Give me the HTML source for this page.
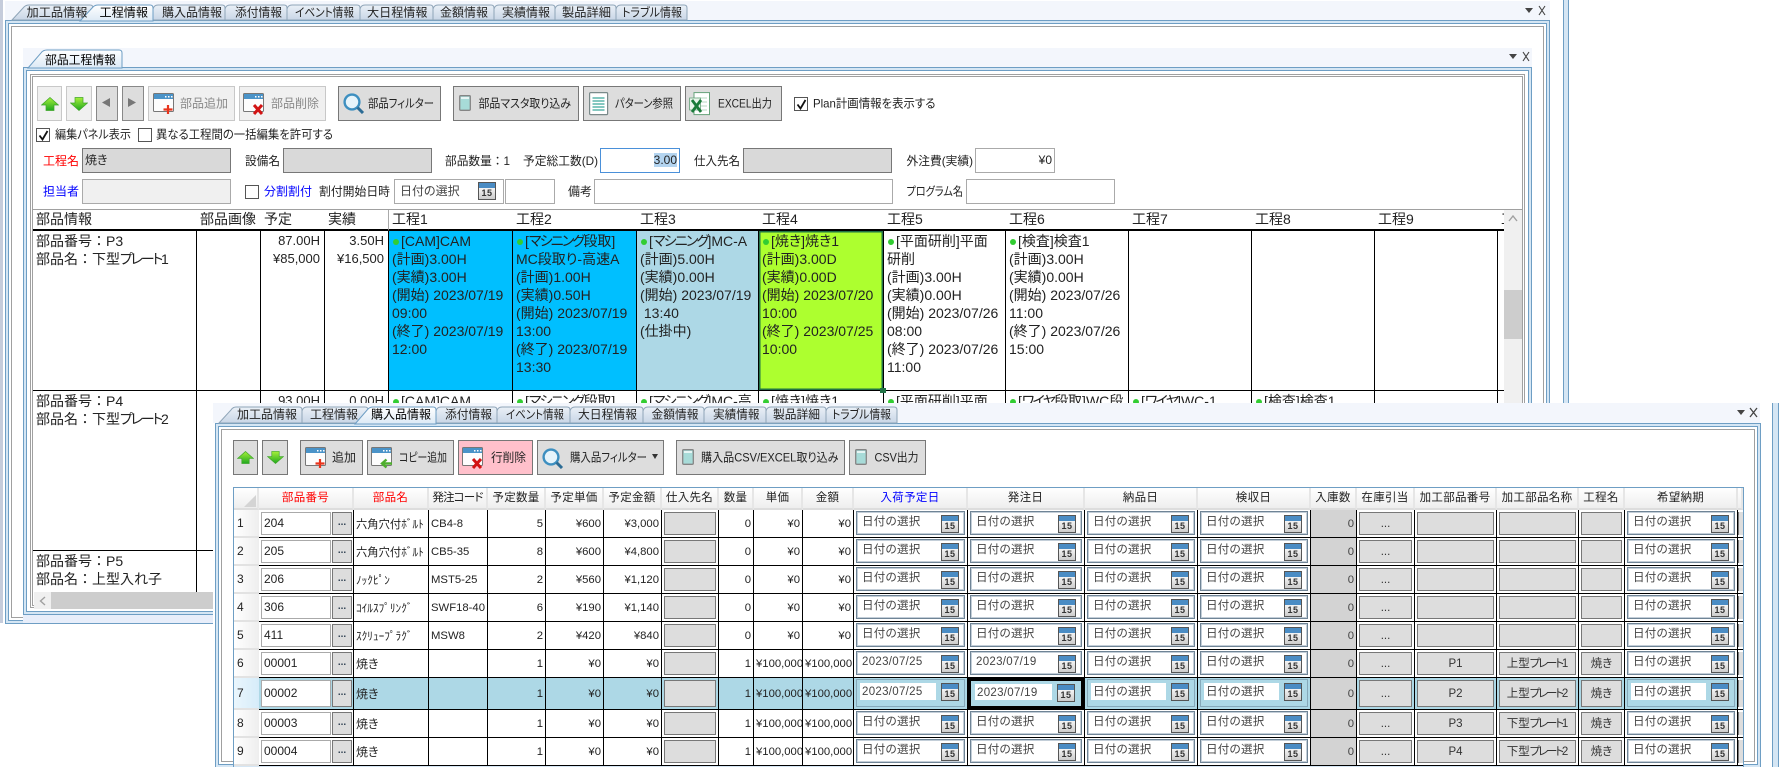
<!DOCTYPE html>
<html lang="ja"><head><meta charset="utf-8"><title>部品工程情報</title>
<style>
html,body{margin:0;padding:0;background:#fff;width:1782px;height:771px;overflow:hidden}
body{position:relative;font-family:"Liberation Sans","Noto Sans CJK JP",sans-serif;font-feature-settings:"palt";color:#222;font-size:12px}
div,span,svg{box-sizing:border-box}
.a{position:absolute}
.strip{position:absolute;background:#f3f6fc}
.fr{position:absolute;box-sizing:border-box;border:1px solid #6e9ec4;background:#fff;box-shadow:inset 0 0 0 2px #d5e6f4,inset 0 0 0 3px #6e9ec4,inset 0 0 0 5px #fff,inset 0 0 0 6px #a0a0a0}
.fi{box-shadow:inset 0 0 0 2px #d5e6f4,inset 0 0 0 3px #6e9ec4,inset 0 0 0 6px #fff,inset 0 0 0 7px #a0a0a0,inset 0 0 0 8px #fff,inset 0 0 0 9px #a0a0a0}
.f{font-feature-settings:normal}
.k{letter-spacing:-1.8px}
.k2{letter-spacing:-2.2px}
.btn{position:absolute;background:#ddd;border:1.5px solid #777}
.dis{background:#f0f0f0;border:1.5px solid #c8c8c8}
.i{position:absolute;height:25px;border:1.5px solid #777;background:#d9d9d9;font-size:12px;line-height:22px;padding-left:2px}
.w{background:#fff;border:1.5px solid #aaa}
.cb{position:absolute;width:14px;height:14px;border:1px solid #555;background:#fff}
.cb svg{position:absolute;left:1px;top:1px}
.c{position:absolute;display:block;box-sizing:border-box;width:18px;height:18px;border:1px solid #555;background:linear-gradient(#4a8cc4 0,#4a8cc4 5px,#f4f4f4 5px,#ccc);font:bold 9px/1 "Liberation Sans",sans-serif;padding-top:6px;text-align:center;color:#333;letter-spacing:.5px}
table{border-collapse:separate;border-spacing:0;table-layout:fixed;position:absolute;left:0;top:0}
#ga td{position:relative;vertical-align:top;padding:1px 3px;border-right:1px solid #000;border-bottom:1px solid #000;font-size:14px;line-height:18px;white-space:nowrap;overflow:hidden}
#ga td.z{border-right:0}
#ga th{font-weight:400;font-size:14px;line-height:19px;text-align:left;padding:0 3px;border-bottom:2px solid #000;white-space:nowrap;height:21px;box-sizing:border-box;overflow:hidden;vertical-align:top}
#ga td.n{text-align:right;font-size:13px;padding-right:4px}
#ga td.u{background:#00bfff}
#ga td.v{background:#add8e6}
#ga td.y{background:#adff2f;box-shadow:inset 0 0 0 1.5px #217346;overflow:visible}
.o{display:inline-block;width:6px;height:6px;border-radius:50%;background:#32cd32;margin:0 2px 1px 1px;vertical-align:middle}
#gb th{box-sizing:border-box;height:22px;padding:0;font-weight:400;font-size:11.5px;line-height:20px;text-align:center;background:linear-gradient(#fff,#eee);border-right:2px solid #e6e6e6;border-bottom:2px solid #ddd;white-space:nowrap;overflow:hidden;letter-spacing:.3px}
#gb td{position:relative;box-sizing:border-box;height:28px;padding:0 2px;border-right:1px solid #000;border-bottom:1px solid #000;font-size:11.3px;white-space:nowrap;overflow:hidden;background:#fff}
#gb tr.x td{height:32px;background:#add8e6}
#gb td.h{background:linear-gradient(90deg,#fff,#eee);border-right:0;border-bottom:2px solid #e2e2e2;padding-left:3px;font-size:12px}
#gb tr.x td.h{background:linear-gradient(90deg,#eaf6fd,#d6ecf9)}
#gb td.r{text-align:right;padding-right:2px}
#gb td.s,#gb tr.x td.s{background:#d3d3d3;text-align:right;padding-right:2px;color:#444}
#gb td.e,#gb tr.x td.e{padding:0;border-right:0;background:#fff}
#gb td.e::after{content:"";position:absolute;left:0;right:0;top:2px;bottom:2px;background:#ddd;border-left:1.5px solid #777}
.pn{position:absolute;left:2px;top:2px;bottom:2px;width:70px;background:#fff;border:1.5px solid #aaa;line-height:20px;padding-left:2px;font-size:12px}
.pb{position:absolute;left:73px;top:2px;bottom:2px;width:20px;background:#ddd;border:1.5px solid #777;text-align:center;line-height:19px;font-weight:700;font-size:10px;color:#345}
.x .pn{line-height:24px}
.x .pb{line-height:24px}
.g{position:absolute;left:2px;right:2px;top:2px;bottom:2px;background:#ddd;border:1.5px solid #777;text-align:center;line-height:22px;font-size:11.5px;color:#333}
.x .g{line-height:26px}
.d{position:absolute;left:2px;right:2px;top:1px;bottom:2px;border:1px solid #6f8496;box-shadow:inset 0 0 0 1px #c3ced8;background:#fff;color:#444;font-size:11.5px;line-height:20px;padding-left:5px;letter-spacing:.3px}
.d .c{right:5px;top:3px}
.x .d{background:#add8e6;border-color:#86a9ba;box-shadow:none}
.x .d span{position:absolute;left:3px;top:3px;bottom:6px;right:28px;background:#fff;padding-left:2px;line-height:18px}
.x .d .c{top:3px}
</style></head><body>
<svg width="0" height="0" style="position:absolute"><defs>
<linearGradient id="gu" x1="0" y1="0" x2="0" y2="1"><stop offset="0" stop-color="#a6f03a"/><stop offset="1" stop-color="#1fa81f"/></linearGradient>
<linearGradient id="tn" x1="0" y1="0" x2="0" y2="1"><stop offset="0" stop-color="#eaf0f7"/><stop offset="1" stop-color="#c9d6e6"/></linearGradient>
<linearGradient id="ta" x1="0" y1="0" x2="0" y2="1"><stop offset="0" stop-color="#ffffff"/><stop offset="1" stop-color="#dce9f5"/></linearGradient>
<symbol id="up" viewBox="0 0 18 14"><polygon points="9,.5 17.5,8 13,8 13,13.5 5,13.5 5,8 .5,8" fill="url(#gu)" stroke="#3fa52a" stroke-width=".7"/></symbol>
<symbol id="dn" viewBox="0 0 18 14"><polygon points="5,.5 13,.5 13,6 17.5,6 9,13.5 .5,6 5,6" fill="url(#gu)" stroke="#3fa52a" stroke-width=".7"/></symbol>
<symbol id="win" viewBox="0 0 22 20"><rect x=".5" y=".5" width="20" height="18" rx="1" fill="#fdfdfd" stroke="#777"/><rect x="1" y="1" width="19" height="5" fill="#4a93c8"/><rect x="12" y="3" width="1.5" height="1.5" fill="#fff"/><rect x="15" y="3" width="1.5" height="1.5" fill="#fff"/><rect x="18" y="3" width="1.5" height="1.5" fill="#fff"/></symbol>
<symbol id="mg" viewBox="0 0 22 21"><circle cx="9" cy="9" r="7.4" fill="#e6f4fb" stroke="#3d8fc0" stroke-width="2.4"/><path d="M14.5 14.5L20 20" stroke="#2c6c95" stroke-width="3"/></symbol>
<symbol id="doc" viewBox="0 0 12 16"><rect x=".7" y=".7" width="10.6" height="14.6" rx="1" fill="#a7dbd8" stroke="#858585" stroke-width="1.3"/><rect x="2" y="2" width="8" height="2" fill="#e6f5f4"/></symbol>
</defs></svg>

<!-- window A outer -->
<div class="a" style="left:0;top:0;width:3px;height:623px;background:#c5ccdb"></div>
<div class="a" style="left:1563px;top:0;width:6px;height:403px;background:#d5e6f4;border-left:1px solid #6e9ec4;border-right:1px solid #6e9ec4"></div>
<div class="strip" style="left:5px;top:1px;width:1545px;height:19px"></div>
<div class="fr" style="left:5px;top:20px;width:1545px;height:604px"></div>
<svg class="a" style="left:0;top:0" width="700" height="24">
<g stroke="#8fa5b8" fill="url(#tn)">
<path d="M12 20L24 7Q26 5 29 5L90 5Q93 5 93 8L93 20Z"/>
<path d="M153 20L153 9Q154 5 158 5L222 5Q225 5 225 8L225 20Z"/>
<path d="M225 20L225 9Q226 5 230 5L284 5Q287 5 287 8L287 20Z"/>
<path d="M287 20L287 9Q288 5 292 5L357 5Q360 5 360 8L360 20Z"/>
<path d="M360 20L360 9Q361 5 365 5L430 5Q433 5 433 8L433 20Z"/>
<path d="M433 20L433 9Q434 5 438 5L491 5Q494 5 494 8L494 20Z"/>
<path d="M494 20L494 9Q495 5 499 5L552 5Q555 5 555 8L555 20Z"/>
<path d="M555 20L555 9Q556 5 560 5L613 5Q616 5 616 8L616 20Z"/>
<path d="M616 20L616 9Q617 5 621 5L684 5Q687 5 687 8L687 20Z"/>
</g>
<path d="M80 21L93 7Q95 5 98 5L150 5Q153 5 153 8L153 21Z" fill="url(#ta)" stroke="#6e9ec4"/>
<g font-size="12" fill="#222">
<text x="26.5" y="16.5" textLength="61" lengthAdjust="spacingAndGlyphs">加工品情報</text>
<text x="99.5" y="16.5" textLength="48.5" lengthAdjust="spacingAndGlyphs" fill="#000">工程情報</text>
<text x="162" y="16.5" textLength="60" lengthAdjust="spacingAndGlyphs">購入品情報</text>
<text x="235" y="16.5" textLength="47" lengthAdjust="spacingAndGlyphs">添付情報</text>
<text x="295" y="16.5" textLength="59" lengthAdjust="spacingAndGlyphs">イベント情報</text>
<text x="367" y="16.5" textLength="60.5" lengthAdjust="spacingAndGlyphs">大日程情報</text>
<text x="440" y="16.5" textLength="48" lengthAdjust="spacingAndGlyphs">金額情報</text>
<text x="502" y="16.5" textLength="48" lengthAdjust="spacingAndGlyphs">実績情報</text>
<text x="562" y="16.5" textLength="49" lengthAdjust="spacingAndGlyphs">製品詳細</text>
<text x="622" y="16.5" textLength="60" lengthAdjust="spacingAndGlyphs">トラブル情報</text>
</g></svg>
<svg class="a" style="left:1522px;top:4px" width="26" height="14"><polygon points="3,4 11,4 7,9" fill="#444"/><path d="M17 2L23 11M23 2L17 11" stroke="#444" stroke-width="1.1"/></svg>

<!-- window A inner -->
<div class="strip" style="left:23px;top:48px;width:1509px;height:19px"></div>
<div class="fr fi" style="left:23px;top:67px;width:1509px;height:548px"></div>
<div class="a" style="left:23px;top:615px;width:190px;height:8px;background:#e8eefa"></div>
<svg class="a" style="left:20px;top:46px" width="110" height="24"><path d="M8 22L21 7Q23 4 27 4L99 4Q102 4 102 7L102 22Z" fill="url(#ta)" stroke="#6e9ec4"/><text x="25" y="18" font-size="12" textLength="71" lengthAdjust="spacingAndGlyphs" fill="#000">部品工程情報</text></svg>
<svg class="a" style="left:1506px;top:50px" width="26" height="14"><polygon points="3,4 11,4 7,9" fill="#444"/><path d="M17 2L23 11M23 2L17 11" stroke="#444" stroke-width="1.1"/></svg>

<!-- A toolbar -->
<div class="btn dis" style="left:37px;top:86px;width:25px;height:35px"><svg class="a" style="left:3px;top:10px" width="18" height="14"><use href="#up"/></svg></div>
<div class="btn dis" style="left:66px;top:86px;width:26px;height:35px"><svg class="a" style="left:3px;top:10px" width="18" height="14"><use href="#dn"/></svg></div>
<div class="btn" style="left:96px;top:86px;width:22px;height:35px;border-color:#888"><svg class="a" style="left:5px;top:11px" width="10" height="10"><polygon points="8,0 8,9 0,4.5" fill="#777"/></svg></div>
<div class="btn" style="left:122px;top:86px;width:22px;height:35px;border-color:#888"><svg class="a" style="left:5px;top:11px" width="10" height="10"><polygon points="0,0 8,4.5 0,9" fill="#777"/></svg></div>
<div class="btn dis" style="left:148px;top:86px;width:87px;height:35px"></div>
<svg class="a" style="left:153px;top:93px" width="22" height="22"><use href="#win" width="22" height="20"/><path d="M15 12V21M10.5 16.500H19.500" stroke="#e8341c" stroke-width="2.2"/></svg>
<div class="btn dis" style="left:239px;top:86px;width:87px;height:35px"></div>
<svg class="a" style="left:243px;top:93px" width="24" height="23"><use href="#win" width="22" height="20"/><path d="M11 12L19 21M19 12L11 21" stroke="#d21414" stroke-width="3"/></svg>
<div class="btn" style="left:338px;top:86px;width:103px;height:35px"></div>
<svg class="a" style="left:343px;top:93px" width="22" height="21"><use href="#mg"/></svg>
<div class="btn" style="left:453px;top:86px;width:126px;height:35px"></div>
<svg class="a" style="left:459px;top:95px" width="12" height="16"><use href="#doc"/></svg>
<div class="btn" style="left:583px;top:86px;width:98px;height:35px"></div>
<svg class="a" style="left:589px;top:92px" width="20" height="24"><rect x=".6" y=".6" width="18" height="22" rx="1" fill="#fff" stroke="#7a8a8a" stroke-width="1.2"/><path d="M3.500 6H15.500M3.500 9H15.500M3.500 12H15.500M3.500 15H15.500M3.500 18H15.500" stroke="#5cb5ac" stroke-width="1.6"/></svg>
<div class="btn" style="left:685px;top:86px;width:97px;height:35px"></div>
<svg class="a" style="left:689px;top:92px" width="22" height="24"><rect x="5" y=".6" width="15.500" height="22" fill="#fff" stroke="#67a27a"/><path d="M8 6H18M8 10H18M8 14H18M8 18H18" stroke="#b7d8c2"/><rect x=".6" y="6" width="11" height="12" fill="#eaf5ec" stroke="#67a27a" stroke-width=".8"/><path d="M3 8L12 20M12 8L3 20" stroke="#1b7b3a" stroke-width="2.800"/></svg>
<div class="cb" style="left:794px;top:97px"><svg width="11" height="11"><path d="M1.500 5.500L4.500 9.500L9.500 1" fill="none" stroke="#111" stroke-width="1.800"/></svg></div>
<div class="cb" style="left:36px;top:128px"><svg width="11" height="11"><path d="M1.500 5.500L4.500 9.500L9.500 1" fill="none" stroke="#111" stroke-width="1.800"/></svg></div>
<div class="cb" style="left:138px;top:128px"></div>

<div class="i" style="left:82px;top:148px;width:149px">焼き</div>
<div class="i" style="left:283px;top:148px;width:149px"></div>
<div class="i w" style="left:600px;top:148px;width:80px;border-color:#4a90d9;text-align:right;padding-right:2px"><span style="background:#b3d4f0">3.00</span></div>
<div class="i" style="left:743px;top:148px;width:149px"></div>
<div class="i w" style="left:975px;top:148px;width:80px;text-align:right;padding-right:2px">¥0</div>
<div class="i" style="left:82px;top:179px;width:149px;background:#f0f0f0;border-color:#aaa"></div>
<div class="cb" style="left:245px;top:185px"></div>
<div class="i w" style="left:394px;top:179px;width:110px;padding-left:5px;color:#444">日付の選択<b class="c" style="left:83px;top:2px">15</b></div>
<div class="i w" style="left:505px;top:179px;width:50px"></div>
<div class="i w" style="left:594px;top:179px;width:299px"></div>
<div class="i w" style="left:966px;top:179px;width:149px"></div>

<svg class="a" style="left:0;top:0" width="1200" height="210" font-size="12" fill="#222">
<g fill="#888"><text x="180" y="107.500" textLength="48" lengthAdjust="spacingAndGlyphs">部品追加</text><text x="271" y="107.500" textLength="48" lengthAdjust="spacingAndGlyphs">部品削除</text></g>
<text x="368" y="107.500" textLength="66" lengthAdjust="spacingAndGlyphs">部品フィルター</text>
<text x="478.500" y="107.500" textLength="92.500" lengthAdjust="spacingAndGlyphs">部品マスタ取り込み</text>
<text x="615" y="107.500" textLength="58" lengthAdjust="spacingAndGlyphs">パターン参照</text>
<text x="718" y="107.500" textLength="54" lengthAdjust="spacingAndGlyphs">EXCEL出力</text>
<text x="813" y="107.500" textLength="122.500" lengthAdjust="spacingAndGlyphs">Plan計画情報を表示する</text>
<text x="55" y="138.500" textLength="76" lengthAdjust="spacingAndGlyphs">編集パネル表示</text>
<text x="156" y="138.500" textLength="177" lengthAdjust="spacingAndGlyphs">異なる工程間の一括編集を許可する</text>
<text x="43" y="165" textLength="36" lengthAdjust="spacingAndGlyphs" fill="#f00">工程名</text>
<text x="245" y="165" textLength="35" lengthAdjust="spacingAndGlyphs">設備名</text>
<text x="445" y="165" textLength="65" lengthAdjust="spacingAndGlyphs" class="f">部品数量：1</text>
<text x="523" y="165" textLength="75" lengthAdjust="spacingAndGlyphs">予定総工数(D)</text>
<text x="694" y="165" textLength="46" lengthAdjust="spacingAndGlyphs">仕入先名</text>
<text x="906.500" y="165" textLength="66.500" lengthAdjust="spacingAndGlyphs">外注費(実績)</text>
<text x="43" y="195.500" textLength="36" lengthAdjust="spacingAndGlyphs" fill="#00f">担当者</text>
<text x="264" y="195.500" textLength="48" lengthAdjust="spacingAndGlyphs" fill="#00f">分割割付</text>
<text x="319" y="195.500" textLength="71" lengthAdjust="spacingAndGlyphs">割付開始日時</text>
<text x="568" y="195.500" textLength="24" lengthAdjust="spacingAndGlyphs">備考</text>
<text x="906.500" y="195.500" textLength="56.500" lengthAdjust="spacingAndGlyphs">プログラム名</text>
</svg>

<!-- grid A -->
<div class="a" style="left:33px;top:209px;width:1490px;height:1px;background:#a0a0a0"></div>
<div class="a" style="left:33px;top:210px;width:1471px;height:382px;overflow:hidden">
<table id="ga" style="width:1471px">
<colgroup><col style="width:164px"><col style="width:64px"><col style="width:64px"><col style="width:64px"><col style="width:124px"><col style="width:124px"><col style="width:122px"><col style="width:125px"><col style="width:122px"><col style="width:123px"><col style="width:123px"><col style="width:123px"><col style="width:123px"><col style="width:6px"></colgroup>
<tr><th>部品情報</th><th>部品画像</th><th>予定</th><th style="border-right:1px solid #aaa">実績</th><th>工程1</th><th>工程2</th><th>工程3</th><th>工程4</th><th>工程5</th><th>工程6</th><th>工程7</th><th>工程8</th><th>工程9</th><th>工程10</th></tr>
<tr style="height:160px">
<td>部品番号<span class="f">：</span>P3<br>部品名<span class="f">：</span>下型<span class="k2">プレート</span>1</td><td></td>
<td class="n">87.00H<br>¥85,000</td><td class="n">3.50H<br>¥16,500</td>
<td class="u"><b class="o"></b>[CAM]CAM<br>(計画)3.00H<br>(実績)3.00H<br>(開始) 2023/07/19<br>09:00<br>(終了) 2023/07/19<br>12:00</td>
<td class="u"><b class="o"></b>[<span class="k">マシニング</span>段取]<br>MC段取り-高速A<br>(計画)1.00H<br>(実績)0.50H<br>(開始) 2023/07/19<br>13:00<br>(終了) 2023/07/19<br>13:30</td>
<td class="v"><b class="o"></b>[<span class="k">マシニング</span>]MC-A<br>(計画)5.00H<br>(実績)0.00H<br>(開始) 2023/07/19<br>&nbsp;13:40<br>(仕掛中)</td>
<td class="y"><b class="o"></b>[焼き]焼き1<br>(計画)3.00D<br>(実績)0.00D<br>(開始) 2023/07/20<br>10:00<br>(終了) 2023/07/25<br>10:00</td>
<td><b class="o"></b>[平面研削]平面<br>研削<br>(計画)3.00H<br>(実績)0.00H<br>(開始) 2023/07/26<br>08:00<br>(終了) 2023/07/26<br>11:00</td>
<td><b class="o"></b>[検査]検査1<br>(計画)3.00H<br>(実績)0.00H<br>(開始) 2023/07/26<br>11:00<br>(終了) 2023/07/26<br>15:00</td>
<td></td><td></td><td></td><td class="z"></td></tr>
<tr style="height:160px">
<td>部品番号<span class="f">：</span>P4<br>部品名<span class="f">：</span>下型<span class="k2">プレート</span>2</td><td></td>
<td class="n">93.00H</td><td class="n">0.00H</td>
<td><b class="o"></b>[CAM]CAM</td><td><b class="o"></b>[<span class="k">マシニング</span>段取]</td><td><b class="o"></b>[<span class="k">マシニング</span>]MC-高</td><td><b class="o"></b>[焼き]焼き1</td><td><b class="o"></b>[平面研削]平面</td><td><b class="o"></b>[<span class="k">ワイヤ</span>段取]WC段</td><td><b class="o"></b>[<span class="k">ワイヤ</span>]WC-1</td><td><b class="o"></b>[検査]検査1</td><td></td><td class="z"></td></tr>
<tr style="height:60px"><td>部品番号<span class="f">：</span>P5<br>部品名<span class="f">：</span>上型入れ子</td><td></td><td></td><td></td><td></td><td></td><td></td><td></td><td></td><td></td><td></td><td></td><td></td><td class="z"></td></tr>
</table>
</div>
<div class="a" style="left:880px;top:388px;width:6px;height:5px;background:#217346"></div>
<div class="a" style="left:388px;top:210px;width:1px;height:19px;background:#aaa"></div>
<div class="a" style="left:1504px;top:210px;width:18px;height:382px;background:#f0f0f0"><div class="a" style="left:0;top:80px;width:18px;height:49px;background:#cdcdcd"></div><svg class="a" style="left:4px;top:5px" width="10" height="8"><path d="M1 6L5 1L9 6" fill="none" stroke="#a0a0a0" stroke-width="1.400"/></svg></div>
<div class="a" style="left:1522px;top:209px;width:1px;height:383px;background:#a0a0a0"></div>
<div class="a" style="left:34px;top:592px;width:180px;height:17px;background:#cdcdcd"><div class="a" style="left:0;top:0;width:17px;height:17px;background:#f0f0f0"></div><svg class="a" style="left:5px;top:4px" width="8" height="10"><path d="M6 1L1.500 5L6 9" fill="none" stroke="#a0a0a0" stroke-width="1.400"/></svg></div>

<!-- far right lines of window B parent -->
<div class="a" style="left:1772px;top:403px;width:7px;height:364px;background:#d5e6f4;border-left:1.500px solid #6e9ec4;border-right:1.500px solid #6e9ec4"></div>

<!-- window B -->
<div class="a" style="left:213px;top:403px;width:1547px;height:364px;background:#fff"></div>
<div class="strip" style="left:213px;top:403px;width:1547px;height:20px"></div>
<div class="a" style="left:215px;top:423px;width:1546px;height:344px;background:#fff;border:1px solid #6e9ec4;border-bottom:0;box-shadow:inset 0 0 0 2px #d5e6f4,inset 0 0 0 3px #6e9ec4,inset 0 0 0 5px #fff,inset 0 0 0 6px #a0a0a0"></div>
<div class="a" style="left:215px;top:767px;width:1546px;height:4px;background:#fff"></div>
<svg class="a" style="left:213px;top:403px" width="700" height="22">
<g stroke="#8fa5b8" fill="url(#tn)">
<path d="M6 20L18 7Q20 4 23 4L86 4Q89 4 89 7L89 20Z"/>
<path d="M89 20L89 8Q90 4 94 4L152 4Q155 4 155 7L155 20Z"/>
<path d="M223 20L223 8Q224 4 228 4L281 4Q284 4 284 7L284 20Z"/>
<path d="M284 20L284 8Q285 4 289 4L354 4Q357 4 357 7L357 20Z"/>
<path d="M357 20L357 8Q358 4 362 4L427 4Q430 4 430 7L430 20Z"/>
<path d="M430 20L430 8Q431 4 435 4L488 4Q491 4 491 7L491 20Z"/>
<path d="M491 20L491 8Q492 4 496 4L550 4Q553 4 553 7L553 20Z"/>
<path d="M553 20L553 8Q554 4 558 4L610 4Q613 4 613 7L613 20Z"/>
<path d="M613 20L613 8Q614 4 618 4L681 4Q684 4 684 7L684 20Z"/>
</g>
<path d="M142 21L155 6Q157 4 160 4L220 4Q223 4 223 7L223 21Z" fill="url(#ta)" stroke="#6e9ec4"/>
<g font-size="12" fill="#222">
<text x="24" y="15.500" textLength="60" lengthAdjust="spacingAndGlyphs">加工品情報</text>
<text x="97" y="15.500" textLength="48" lengthAdjust="spacingAndGlyphs">工程情報</text>
<text x="158" y="15.500" textLength="60" lengthAdjust="spacingAndGlyphs" fill="#000">購入品情報</text>
<text x="232" y="15.500" textLength="47" lengthAdjust="spacingAndGlyphs">添付情報</text>
<text x="293" y="15.500" textLength="58" lengthAdjust="spacingAndGlyphs">イベント情報</text>
<text x="365" y="15.500" textLength="59" lengthAdjust="spacingAndGlyphs">大日程情報</text>
<text x="438.500" y="15.500" textLength="47" lengthAdjust="spacingAndGlyphs">金額情報</text>
<text x="500" y="15.500" textLength="46.500" lengthAdjust="spacingAndGlyphs">実績情報</text>
<text x="560" y="15.500" textLength="47" lengthAdjust="spacingAndGlyphs">製品詳細</text>
<text x="619" y="15.500" textLength="59" lengthAdjust="spacingAndGlyphs">トラブル情報</text>
</g></svg>
<svg class="a" style="left:1735px;top:405px" width="26" height="14"><polygon points="2,5 10,5 6,10" fill="#444"/><path d="M15 3L22 12M22 3L15 12" stroke="#444" stroke-width="1.300"/></svg>

<!-- B toolbar -->
<div class="btn" style="left:233px;top:440px;width:25px;height:35px"><svg class="a" style="left:3px;top:10px" width="17" height="13"><use href="#up"/></svg></div>
<div class="btn" style="left:262px;top:440px;width:26px;height:35px"><svg class="a" style="left:4px;top:10px" width="17" height="13"><use href="#dn"/></svg></div>
<div class="btn" style="left:300px;top:440px;width:63px;height:35px"></div>
<svg class="a" style="left:305px;top:447px" width="22" height="22"><use href="#win" width="22" height="20"/><path d="M15 12V21M10.500 16.500H19.500" stroke="#e8341c" stroke-width="2.200"/></svg>
<div class="btn" style="left:367px;top:440px;width:87px;height:35px"></div>
<svg class="a" style="left:371px;top:447px" width="24" height="22"><use href="#win" width="22" height="20"/><path d="M21 16.500H12M15.500 12.500L11 16.500L15.500 20.500" fill="none" stroke="#4fae2e" stroke-width="2.400"/></svg>
<div class="btn" style="left:458px;top:440px;width:75px;height:35px;background:#ffc0cb"></div>
<svg class="a" style="left:462px;top:447px" width="25" height="23"><use href="#win" width="22" height="20"/><path d="M11 12L19 21M19 12L11 21" stroke="#d21414" stroke-width="3"/></svg>
<div class="btn" style="left:537px;top:440px;width:127px;height:35px"></div>
<svg class="a" style="left:542px;top:448px" width="22" height="21"><use href="#mg"/></svg>
<svg class="a" style="left:652px;top:454px" width="7" height="6"><polygon points="0,0 6,0 3,5" fill="#333"/></svg>
<div class="btn" style="left:676px;top:440px;width:169px;height:35px"></div>
<svg class="a" style="left:682px;top:449px" width="12" height="16"><use href="#doc"/></svg>
<div class="btn" style="left:849px;top:440px;width:77px;height:35px"></div>
<svg class="a" style="left:855px;top:449px" width="12" height="16"><use href="#doc"/></svg>
<svg class="a" style="left:0;top:430px" width="1000" height="50" font-size="12" fill="#222">
<text x="332" y="31.500" textLength="24" lengthAdjust="spacingAndGlyphs">追加</text>
<text x="399" y="31.500" textLength="48" lengthAdjust="spacingAndGlyphs">コピー追加</text>
<text x="491" y="31.500" textLength="35" lengthAdjust="spacingAndGlyphs">行削除</text>
<text x="570" y="31.500" textLength="77" lengthAdjust="spacingAndGlyphs">購入品フィルター</text>
<text x="701" y="31.500" textLength="137.500" lengthAdjust="spacingAndGlyphs">購入品CSV/EXCEL取り込み</text>
<text x="874.500" y="31.500" textLength="44" lengthAdjust="spacingAndGlyphs">CSV出力</text>
</svg>

<!-- grid B -->
<div class="a" style="left:234px;top:488px;width:1509px;height:279px;overflow:hidden">
<table id="gb" style="width:1509px">
<colgroup><col style="width:25px"><col style="width:95px"><col style="width:75px"><col style="width:59px"><col style="width:58px"><col style="width:58px"><col style="width:58px"><col style="width:57px"><col style="width:35px"><col style="width:49px"><col style="width:51px"><col style="width:114px"><col style="width:117px"><col style="width:113px"><col style="width:113px"><col style="width:46px"><col style="width:58px"><col style="width:82px"><col style="width:82px"><col style="width:46px"><col style="width:113px"><col style="width:5px"></colgroup>
<tr><th style="position:relative"><svg class="a" style="left:9px;top:6px" width="14" height="14"><polygon points="13,1 13,13 1,13" fill="#d4d4d4"/></svg></th><th style="color:#f00">部品番号</th><th style="color:#f00">部品名</th><th style="letter-spacing:-.8px">発注コード</th><th>予定数量</th><th>予定単価</th><th>予定金額</th><th>仕入先名</th><th>数量</th><th>単価</th><th>金額</th><th style="color:#00f">入荷予定日</th><th>発注日</th><th>納品日</th><th>検収日</th><th>入庫数</th><th>在庫引当</th><th>加工部品番号</th><th>加工部品名称</th><th>工程名</th><th>希望納期</th><th></th></tr>
<tr><td class="h">1</td><td><div class="pn">204</div><div class="pb">...</div></td><td>六角穴付ﾎﾞﾙﾄ</td><td>CB4-8</td><td class="r">5</td><td class="r">¥600</td><td class="r">¥3,000</td><td><div class="g"></div></td><td class="r">0</td><td class="r">¥0</td><td class="r">¥0</td><td><div class="d">日付の選択<b class="c">15</b></div></td><td><div class="d">日付の選択<b class="c">15</b></div></td><td><div class="d">日付の選択<b class="c">15</b></div></td><td><div class="d">日付の選択<b class="c">15</b></div></td><td class="s">0</td><td><div class="g">...</div></td><td><div class="g"></div></td><td><div class="g"></div></td><td><div class="g"></div></td><td><div class="d">日付の選択<b class="c">15</b></div></td><td class="e"></td></tr>
<tr><td class="h">2</td><td><div class="pn">205</div><div class="pb">...</div></td><td>六角穴付ﾎﾞﾙﾄ</td><td>CB5-35</td><td class="r">8</td><td class="r">¥600</td><td class="r">¥4,800</td><td><div class="g"></div></td><td class="r">0</td><td class="r">¥0</td><td class="r">¥0</td><td><div class="d">日付の選択<b class="c">15</b></div></td><td><div class="d">日付の選択<b class="c">15</b></div></td><td><div class="d">日付の選択<b class="c">15</b></div></td><td><div class="d">日付の選択<b class="c">15</b></div></td><td class="s">0</td><td><div class="g">...</div></td><td><div class="g"></div></td><td><div class="g"></div></td><td><div class="g"></div></td><td><div class="d">日付の選択<b class="c">15</b></div></td><td class="e"></td></tr>
<tr><td class="h">3</td><td><div class="pn">206</div><div class="pb">...</div></td><td>ﾉｯｸﾋﾟﾝ</td><td>MST5-25</td><td class="r">2</td><td class="r">¥560</td><td class="r">¥1,120</td><td><div class="g"></div></td><td class="r">0</td><td class="r">¥0</td><td class="r">¥0</td><td><div class="d">日付の選択<b class="c">15</b></div></td><td><div class="d">日付の選択<b class="c">15</b></div></td><td><div class="d">日付の選択<b class="c">15</b></div></td><td><div class="d">日付の選択<b class="c">15</b></div></td><td class="s">0</td><td><div class="g">...</div></td><td><div class="g"></div></td><td><div class="g"></div></td><td><div class="g"></div></td><td><div class="d">日付の選択<b class="c">15</b></div></td><td class="e"></td></tr>
<tr><td class="h">4</td><td><div class="pn">306</div><div class="pb">...</div></td><td>ｺｲﾙｽﾌﾟﾘﾝｸﾞ</td><td>SWF18-40</td><td class="r">6</td><td class="r">¥190</td><td class="r">¥1,140</td><td><div class="g"></div></td><td class="r">0</td><td class="r">¥0</td><td class="r">¥0</td><td><div class="d">日付の選択<b class="c">15</b></div></td><td><div class="d">日付の選択<b class="c">15</b></div></td><td><div class="d">日付の選択<b class="c">15</b></div></td><td><div class="d">日付の選択<b class="c">15</b></div></td><td class="s">0</td><td><div class="g">...</div></td><td><div class="g"></div></td><td><div class="g"></div></td><td><div class="g"></div></td><td><div class="d">日付の選択<b class="c">15</b></div></td><td class="e"></td></tr>
<tr><td class="h">5</td><td><div class="pn">411</div><div class="pb">...</div></td><td>ｽｸﾘｭｰﾌﾟﾗｸﾞ</td><td>MSW8</td><td class="r">2</td><td class="r">¥420</td><td class="r">¥840</td><td><div class="g"></div></td><td class="r">0</td><td class="r">¥0</td><td class="r">¥0</td><td><div class="d">日付の選択<b class="c">15</b></div></td><td><div class="d">日付の選択<b class="c">15</b></div></td><td><div class="d">日付の選択<b class="c">15</b></div></td><td><div class="d">日付の選択<b class="c">15</b></div></td><td class="s">0</td><td><div class="g">...</div></td><td><div class="g"></div></td><td><div class="g"></div></td><td><div class="g"></div></td><td><div class="d">日付の選択<b class="c">15</b></div></td><td class="e"></td></tr>
<tr><td class="h">6</td><td><div class="pn">00001</div><div class="pb">...</div></td><td style="font-size:12px">焼き</td><td></td><td class="r">1</td><td class="r">¥0</td><td class="r">¥0</td><td><div class="g"></div></td><td class="r">1</td><td class="r">¥100,000</td><td class="r">¥100,000</td><td><div class="d">2023/07/25<b class="c">15</b></div></td><td><div class="d">2023/07/19<b class="c">15</b></div></td><td><div class="d">日付の選択<b class="c">15</b></div></td><td><div class="d">日付の選択<b class="c">15</b></div></td><td class="s">0</td><td><div class="g">...</div></td><td><div class="g">P1</div></td><td><div class="g">上型<span class="k2">プレート</span>1</div></td><td><div class="g">焼き</div></td><td><div class="d">日付の選択<b class="c">15</b></div></td><td class="e"></td></tr>
<tr class="x"><td class="h">7</td><td><div class="pn">00002</div><div class="pb">...</div></td><td style="font-size:12px">焼き</td><td></td><td class="r">1</td><td class="r">¥0</td><td class="r">¥0</td><td><div class="g"></div></td><td class="r">1</td><td class="r">¥100,000</td><td class="r">¥100,000</td><td><div class="d"><span>2023/07/25</span><b class="c">15</b></div></td><td style="box-shadow:inset 0 0 0 3px #000"><div class="d" style="left:4px;right:4px;top:3px;bottom:3px;border:0"><span>2023/07/19</span><b class="c">15</b></div></td><td><div class="d"><span>日付の選択</span><b class="c">15</b></div></td><td><div class="d"><span>日付の選択</span><b class="c">15</b></div></td><td class="s">0</td><td><div class="g">...</div></td><td><div class="g">P2</div></td><td><div class="g">上型<span class="k2">プレート</span>2</div></td><td><div class="g">焼き</div></td><td><div class="d"><span>日付の選択</span><b class="c">15</b></div></td><td class="e"></td></tr>
<tr><td class="h">8</td><td><div class="pn">00003</div><div class="pb">...</div></td><td style="font-size:12px">焼き</td><td></td><td class="r">1</td><td class="r">¥0</td><td class="r">¥0</td><td><div class="g"></div></td><td class="r">1</td><td class="r">¥100,000</td><td class="r">¥100,000</td><td><div class="d">日付の選択<b class="c">15</b></div></td><td><div class="d">日付の選択<b class="c">15</b></div></td><td><div class="d">日付の選択<b class="c">15</b></div></td><td><div class="d">日付の選択<b class="c">15</b></div></td><td class="s">0</td><td><div class="g">...</div></td><td><div class="g">P3</div></td><td><div class="g">下型<span class="k2">プレート</span>1</div></td><td><div class="g">焼き</div></td><td><div class="d">日付の選択<b class="c">15</b></div></td><td class="e"></td></tr>
<tr><td class="h">9</td><td><div class="pn">00004</div><div class="pb">...</div></td><td style="font-size:12px">焼き</td><td></td><td class="r">1</td><td class="r">¥0</td><td class="r">¥0</td><td><div class="g"></div></td><td class="r">1</td><td class="r">¥100,000</td><td class="r">¥100,000</td><td><div class="d">日付の選択<b class="c">15</b></div></td><td><div class="d">日付の選択<b class="c">15</b></div></td><td><div class="d">日付の選択<b class="c">15</b></div></td><td><div class="d">日付の選択<b class="c">15</b></div></td><td class="s">0</td><td><div class="g">...</div></td><td><div class="g">P4</div></td><td><div class="g">下型<span class="k2">プレート</span>2</div></td><td><div class="g">焼き</div></td><td><div class="d">日付の選択<b class="c">15</b></div></td><td class="e"></td></tr>
</table>
</div>
<div class="a" style="left:233px;top:487px;width:1511px;height:280px;border:1px solid #6e9ec4;border-bottom:0"></div>
</body></html>
